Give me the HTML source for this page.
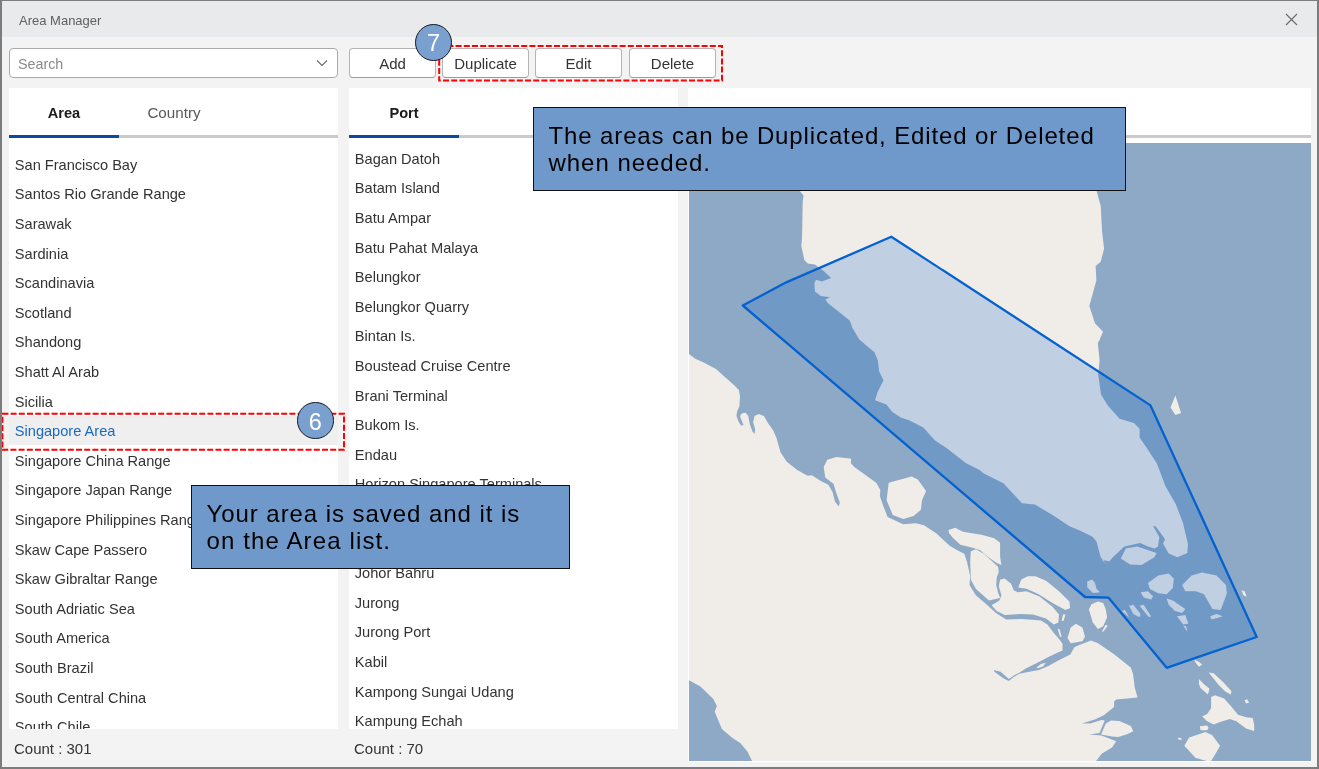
<!DOCTYPE html>
<html><head><meta charset="utf-8">
<style>
*{box-sizing:border-box;margin:0;padding:0}
html,body{width:1319px;height:769px;overflow:hidden;background:#f3f3f3;font-family:"Liberation Sans",sans-serif}
body>*{will-change:transform}
.abs{position:absolute}
#frame{position:absolute;left:0;top:0;width:1319px;height:769px;border-left:2px solid #7c7c7c;border-top:1px solid #7c7c7c;border-right:2px solid #7c7c7c;border-bottom:2px solid #7c7c7c;z-index:50;pointer-events:none}
#title{position:absolute;left:2px;top:1px;width:1315px;height:36px;background:#e9eaec}
#title span{position:absolute;left:17px;top:11.60px;font-size:13px;color:#606060;line-height:16px;white-space:nowrap}
.btn{position:absolute;top:48px;height:30px;width:87px;background:#fff;border:1px solid #b4b4b4;border-bottom-color:#9c9c9c;border-radius:4px}
.btn span{position:absolute;left:0;right:0;top:4.90px;font-size:15px;color:#333;text-align:center;line-height:20px}
.panel{position:absolute;background:#fff;overflow:hidden}
.tab{position:absolute;top:15.20px;width:110px;text-align:center;font-size:15px;line-height:20px;white-space:nowrap}
.tab.on{font-weight:bold;color:#1b1b1b;font-size:14.6px}
.tab.off{color:#5a5a5a}
.tline{position:absolute;top:47px;height:3px;background:#cacaca}
.bline{position:absolute;top:47px;height:3px;background:#0a4a9f}
.item{position:absolute;left:5.8px;font-size:14.6px;color:#333;white-space:nowrap;line-height:18px}
.item.sel{color:#1a68c0}
.count{position:absolute;top:738.50px;font-size:15px;color:#333;line-height:20px;white-space:nowrap}
.callout{position:absolute;background:#6f99cb;border:1px solid #111;z-index:20}
.callout div{position:absolute;font-size:24px;letter-spacing:0.9px;line-height:20px;color:#000;white-space:nowrap}
.circle{position:absolute;border-radius:50%;background:#7aa0d0;border:1.6px solid #141a24;z-index:30}
.circle span{position:absolute;left:0;right:0;text-align:center;color:#fff;font-size:23.5px;line-height:20px}
</style></head><body>
<div id="frame"></div>
<div id="title"><span>Area Manager</span>
<svg class="abs" style="left:1283.3px;top:12.2px" width="13" height="13" viewBox="0 0 13 13"><path d="M1 1L12 12M12 1L1 12" stroke="#6a6a6a" stroke-width="1.1" fill="none"/></svg>
</div>

<div class="abs" style="left:9px;top:48px;width:329px;height:30px;background:#fff;border:1px solid #a9a9a9;border-radius:4px"></div>
<div class="abs" style="left:18.3px;top:54.05px;font-size:14.3px;color:#8a8a8a;line-height:20px">Search</div>
<svg class="abs" style="left:316px;top:58.8px" width="12" height="8" viewBox="0 0 12 8"><path d="M1 1.5L6 6.5L11 1.5" stroke="#6a6a6a" stroke-width="1.1" fill="none"/></svg>

<div class="btn" style="left:349px"><span>Add</span></div>
<div class="btn" style="left:442px"><span>Duplicate</span></div>
<div class="btn" style="left:535px"><span>Edit</span></div>
<div class="btn" style="left:629px"><span>Delete</span></div>

<div class="panel" style="left:9px;top:88px;width:329px;height:641px">
<div class="tab on" style="left:0">Area</div>
<div class="tab off" style="left:110px;font-size:15.2px">Country</div>
<div class="tline" style="left:0;width:329px"></div>
<div class="bline" style="left:0;width:110px"></div>
<div class="abs" style="left:0;top:327.70px;width:329px;height:29px;background:#efefef"></div>
<div class="item" style="top:67.84px">San Francisco Bay</div><div class="item" style="top:97.44px">Santos Rio Grande Range</div><div class="item" style="top:127.04px">Sarawak</div><div class="item" style="top:156.64px">Sardinia</div><div class="item" style="top:186.24px">Scandinavia</div><div class="item" style="top:215.84px">Scotland</div><div class="item" style="top:245.44px">Shandong</div><div class="item" style="top:275.04px">Shatt Al Arab</div><div class="item" style="top:304.64px">Sicilia</div><div class="item sel" style="top:334.24px">Singapore Area</div><div class="item" style="top:363.84px">Singapore China Range</div><div class="item" style="top:393.44px">Singapore Japan Range</div><div class="item" style="top:423.04px">Singapore Philippines Range</div><div class="item" style="top:452.64px">Skaw Cape Passero</div><div class="item" style="top:482.24px">Skaw Gibraltar Range</div><div class="item" style="top:511.84px">South Adriatic Sea</div><div class="item" style="top:541.44px">South America</div><div class="item" style="top:571.04px">South Brazil</div><div class="item" style="top:600.64px">South Central China</div><div class="item" style="top:630.24px">South Chile</div>
</div>

<div class="panel" style="left:349px;top:88px;width:329px;height:641px">
<div class="tab on" style="left:0">Port</div>
<div class="tline" style="left:0;width:329px"></div>
<div class="bline" style="left:0;width:110px"></div>
<div class="item" style="top:61.84px">Bagan Datoh</div><div class="item" style="top:91.44px">Batam Island</div><div class="item" style="top:121.04px">Batu Ampar</div><div class="item" style="top:150.64px">Batu Pahat Malaya</div><div class="item" style="top:180.24px">Belungkor</div><div class="item" style="top:209.84px">Belungkor Quarry</div><div class="item" style="top:239.44px">Bintan Is.</div><div class="item" style="top:269.04px">Boustead Cruise Centre</div><div class="item" style="top:298.64px">Brani Terminal</div><div class="item" style="top:328.24px">Bukom Is.</div><div class="item" style="top:357.84px">Endau</div><div class="item" style="top:387.44px">Horizon Singapore Terminals</div><div class="item" style="top:417.04px">Jahor</div><div class="item" style="top:446.64px">Johor</div><div class="item" style="top:476.24px">Johor Bahru</div><div class="item" style="top:505.84px">Jurong</div><div class="item" style="top:535.44px">Jurong Port</div><div class="item" style="top:565.04px">Kabil</div><div class="item" style="top:594.64px">Kampong Sungai Udang</div><div class="item" style="top:624.24px">Kampung Echah</div>
</div>

<div class="panel" style="left:688px;top:88px;width:623px;height:674px">
<div class="tline" style="left:0;width:623px"></div>
<svg class="abs" style="left:1px;top:55px" width="622" height="618" viewBox="689 143 622 618"><rect x="689" y="143" width="622" height="618" fill="#8ea9c5"/><path d="M689.0,354.1 L695.2,358.7 L703.6,362.5 L716.0,369.1 L725.4,377.5 L733.7,384.7 L738.9,389.9 L740.0,396.2 L739.4,406.6 L737.3,410.7 L736.4,415.9 L738.9,422.2 L741.4,425.7 L743.5,424.9 L741.4,420.1 L740.0,415.9 L742.1,413.2 L745.6,412.8 L748.3,415.9 L749.8,424.3 L752.5,431.6 L754.5,434.0 L755.2,429.5 L753.1,422.2 L754.5,416.0 L758.7,413.9 L763.9,416.0 L768.1,423.2 L773.3,430.5 L776.4,437.8 L780.6,452.4 L786.8,461.7 L797.2,470.0 L807.6,475.7 L811.8,475.2 L820.0,480.6 L828.3,484.7 L832.5,492.0 L835.0,501.4 L838.7,506.6 L839.8,502.4 L836.6,494.1 L833.5,483.7 L825.2,477.5 L823.7,467.0 L827.3,459.8 L836.6,457.1 L851.2,458.7 L850.8,462.9 L854.3,467.0 L876.2,482.7 L880.3,489.9 L879.9,496.2 L883.5,506.6 L887.6,517.0 L903.2,524.3 L915.7,523.2 L924.0,525.3 L936.5,533.6 L950.0,546.0 L957.8,550.6 L964.3,553.8 L966.9,561.6 L970.2,575.9 L969.5,585.0 L976.0,595.4 L986.0,604.0 L996.0,613.0 L1006.0,619.6 L1021.5,619.0 L1041.0,620.5 L1047.4,624.4 L1053.6,632.7 L1059.9,640.0 L1062.5,644.1 L1062.5,650.4 L1057.8,652.4 L1047.4,657.6 L1034.9,663.9 L1026.6,668.0 L1019.3,672.7 L1015.2,674.8 L1008.9,679.0 L1000.6,671.7 L993.8,670.1 L994.4,671.7 L1003.7,678.4 L1008.9,681.0 L1013.1,677.4 L1019.3,673.7 L1031.8,671.2 L1039.1,670.1 L1048.4,666.0 L1057.8,660.8 L1070.3,654.5 L1074.4,647.2 L1078.6,645.2 L1091.1,640.5 L1098.1,643.3 L1114.4,654.6 L1130.7,667.6 L1133.1,674.1 L1134.7,687.2 L1137.5,697.5 L1116.2,699.6 L1114.1,701.6 L1114.1,706.9 L1103.7,715.2 L1095.4,719.3 L1081.9,723.5 L1090.2,723.5 L1101.6,719.9 L1104.7,720.4 L1099.5,732.9 L1089.1,734.4 L1101.6,735.5 L1116.2,741.2 L1112.0,747.4 L1101.6,753.7 L1095.4,762.0 L752.5,762.0 L747.6,751.8 L740.5,743.3 L731.9,737.5 L721.9,729.0 L714.7,711.8 L716.8,706.1 L713.3,698.9 L700.4,686.6 L689.0,680.3Z M797.7,140.0 L799.6,190.8 L803.6,195.5 L802.7,201.4 L802.0,238.8 L801.3,245.8 L804.3,259.9 L807.8,263.4 L814.9,264.5 L824.2,271.5 L831.2,278.1 L821.9,281.4 L816.0,279.7 L814.4,283.2 L814.9,291.4 L820.7,296.1 L830.1,297.3 L825.4,299.6 L827.7,303.1 L838.2,311.3 L849.9,320.7 L852.3,327.7 L859.3,339.4 L867.5,346.4 L874.5,352.3 L877.8,360.2 L879.2,371.6 L883.5,380.2 L877.8,391.6 L875.0,400.2 L886.4,404.5 L892.1,411.7 L900.7,417.4 L909.0,420.2 L923.3,427.4 L934.8,440.3 L946.9,448.3 L965.7,462.9 L980.0,470.2 L983.4,473.2 L1003.4,483.2 L1022.0,503.2 L1034.9,504.6 L1052.1,514.7 L1070.0,526.5 L1078.6,530.0 L1092.2,536.5 L1096.5,541.5 L1100.7,557.2 L1106.5,564.4 L1112.9,557.2 L1124.3,546.5 L1140.1,542.9 L1148.0,546.5 L1154.4,548.6 L1158.0,546.5 L1159.4,537.2 L1153.0,525.8 L1155.8,526.5 L1165.1,539.3 L1163.0,543.6 L1168.7,553.6 L1177.3,557.2 L1187.3,552.9 L1188.0,544.3 L1183.0,522.9 L1175.8,504.3 L1165.4,486.0 L1156.8,463.2 L1145.4,446.0 L1139.6,437.4 L1139.6,428.8 L1133.9,423.1 L1119.6,418.8 L1108.2,405.9 L1101.0,394.5 L1098.2,374.5 L1099.6,360.2 L1097.8,343.0 L1099.3,340.4 L1103.0,331.8 L1095.0,323.2 L1089.3,306.1 L1096.4,280.3 L1095.6,266.0 L1100.7,261.7 L1104.1,248.8 L1102.1,231.7 L1100.7,205.9 L1096.4,190.2 L1096.0,140.0Z M888.7,482.7 L911.6,476.4 L917.8,479.5 L926.1,491.0 L922.0,500.3 L920.9,509.7 L913.6,515.9 L903.2,519.1 L892.8,514.9 L886.6,500.3Z M948.5,530.0 L955.2,527.8 L963.0,531.7 L982.5,535.0 L994.2,538.2 L1000.1,542.8 L1000.1,556.4 L1001.4,564.9 L996.8,562.9 L989.0,557.7 L979.9,549.9 L970.8,547.3 L960.4,544.7 L953.0,538.0 L949.0,533.0Z M970.8,551.2 L976.0,549.3 L983.8,553.8 L998.1,566.8 L998.8,572.0 L996.8,577.2 L996.2,585.0 L998.1,592.8 L1000.1,598.0 L989.0,600.6 L976.0,588.9 L970.8,579.8 L970.2,561.6Z M991.6,605.2 L999.4,600.6 L1001.4,595.4 L998.8,586.3 L1000.1,579.8 L1004.6,578.5 L1011.1,583.7 L1013.7,590.2 L1017.6,592.2 L1026.5,591.2 L1039.5,596.4 L1052.5,606.8 L1059.0,614.6 L1058.4,622.4 L1053.8,624.4 L1046.0,618.5 L1033.0,614.6 L1020.0,614.0 L1004.6,614.9 L996.8,611.0Z M1018.3,587.5 L1021.3,579.5 L1027.8,576.3 L1035.6,576.3 L1046.0,580.8 L1059.0,591.2 L1069.4,601.6 L1070.1,608.1 L1065.5,610.1 L1052.5,602.9 L1038.2,594.0 L1026.5,588.8Z M1067.5,638.0 L1070.7,627.6 L1075.9,623.7 L1082.4,627.6 L1085.0,636.7 L1082.4,641.3 L1070.7,643.2Z M1088.9,609.4 L1091.5,604.2 L1098.0,601.6 L1103.2,602.9 L1105.8,609.4 L1107.1,617.2 L1103.2,626.3 L1098.0,628.9 L1092.8,622.4Z M1061.6,621.1 L1063.0,614.6 L1065.5,614.6 L1063.5,621.1Z M1057.7,629.0 L1059.5,629.0 L1061.6,636.7 L1060.0,636.7Z M1101.9,631.5 L1105.5,625.0 L1107.8,625.5 L1103.5,631.5Z M1120.8,558.6 L1125.8,548.6 L1137.2,546.5 L1156.5,552.9 L1154.4,557.2 L1141.5,565.1 L1130.1,564.4Z M1087.2,581.5 L1092.2,579.4 L1095.0,583.0 L1096.5,588.7 L1100.0,592.3 L1092.9,593.0 L1087.2,587.3Z M1147.9,582.9 L1158.3,575.6 L1168.7,573.5 L1173.9,578.7 L1172.8,588.1 L1166.6,594.3 L1158.3,593.3 L1149.9,589.1Z M1182.2,585.0 L1191.6,575.6 L1202.0,572.5 L1216.5,575.6 L1225.9,585.0 L1226.9,593.3 L1220.7,609.9 L1212.4,608.9 L1208.2,601.6 L1204.0,594.3 L1195.7,591.2 L1185.3,591.2Z M1140.6,592.3 L1147.9,591.2 L1153.1,596.4 L1151.0,599.5 L1143.7,597.5Z M1166.6,598.5 L1172.8,600.6 L1185.3,608.9 L1182.2,613.1 L1174.9,611.0 L1168.7,604.7Z M1177.0,616.2 L1185.3,615.1 L1188.4,623.5 L1183.2,624.5Z M1183.2,625.5 L1186.3,626.6 L1187.4,631.8Z M1129.1,605.8 L1133.3,604.7 L1140.6,614.1 L1139.5,617.2 L1133.3,614.1Z M1139.5,605.8 L1143.7,604.7 L1151.0,616.2 L1148.9,617.2Z M1121.8,611.0 L1125.0,609.9 L1129.1,617.2Z M1210.3,616.2 L1216.5,614.1 L1222.8,616.2 L1216.5,618.3 L1211.3,619.3Z M1101.9,560.0 L1109.7,561.3 L1106.5,564.6Z M1184.3,745.7 L1189.2,737.6 L1205.4,731.9 L1212.0,735.1 L1220.1,745.7 L1213.6,757.1 L1210.3,762.0 L1195.7,757.9Z M1202.2,716.4 L1207.1,714.0 L1211.1,708.3 L1211.1,696.9 L1215.2,695.3 L1224.1,698.5 L1231.5,706.7 L1238.0,714.8 L1246.1,717.2 L1252.6,718.0 L1254.2,724.6 L1254.2,731.1 L1246.1,728.6 L1236.3,721.3 L1229.8,718.9 L1220.1,722.1 L1213.6,724.6 L1207.1,721.3Z M1198.9,679.0 L1203.8,683.9 L1209.5,688.8 L1207.9,694.5 L1200.6,688.0 L1198.9,683.9Z M1208.7,672.5 L1213.6,673.3 L1223.3,682.3 L1231.5,691.2 L1230.7,694.5 L1225.0,691.2 L1218.5,684.7Z M1194.1,659.5 L1199.0,662.0 L1202.2,664.4 L1199.0,666.8 L1195.7,662.8Z M1241.5,590.2 L1244.6,591.2 L1246.7,596.4 L1243.6,595.4Z M1244.5,700.2 L1246.9,699.3 L1249.3,702.6 L1246.1,703.4Z M1199.8,726.2 L1207.1,725.4 L1208.7,727.8 L1207.1,730.2 L1200.6,730.2Z M1178.6,737.6 L1181.9,738.4 L1181.1,740.0 L1177.8,739.2Z M1170.5,407.4 L1175.4,395.4 L1181.1,413.1 L1175.4,415.1Z M1036.5,667.5 L1041.0,664.0 L1045.8,662.8 L1043.0,666.5 L1038.0,668.3Z M1101.1,734.4 L1105.8,723.5 L1111.0,720.4 L1119.3,720.9 L1130.8,726.1 L1133.4,731.3 L1127.6,733.9 L1118.3,737.0 L1112.0,736.5Z" fill="#f0ede8"/><path d="M742.8,305.5 L786.8,282.1 L891.3,236.7 L1150.5,405.4 L1256.7,637.0 L1166.7,667.8 L1108.4,597.6 L1085.0,597.0Z" fill="rgba(0,90,205,0.2)" stroke="#0462d0" stroke-width="2.3" stroke-linejoin="round"/></svg>
</div>

<div class="count" style="left:14px">Count : 301</div>
<div class="count" style="left:354px">Count : 70</div>

<svg class="abs" style="left:0;top:0;z-index:25" width="1319" height="769">
<rect x="439.2" y="46" width="282.8" height="34.6" fill="none" stroke="#ff0000" stroke-width="2" stroke-dasharray="6 2.2"/>
<rect x="2.4" y="413.8" width="341.6" height="36" fill="none" stroke="#ff0000" stroke-width="2" stroke-dasharray="6 2.2"/>
</svg>

<div class="circle" style="left:415px;top:24px;width:37px;height:37px"><span style="top:8.46px">7</span></div>
<div class="circle" style="left:297px;top:402px;width:36.5px;height:36.5px"><span style="top:8.76px">6</span></div>

<div class="callout" style="left:533px;top:107px;width:593px;height:84px">
<div style="left:14.5px;letter-spacing:0.88px;top:18.18px">The areas can be Duplicated, Edited or Deleted</div>
<div style="left:14.5px;letter-spacing:0.97px;top:44.98px">when needed.</div>
</div>
<div class="callout" style="left:191px;top:485px;width:379px;height:84px">
<div style="left:14.5px;letter-spacing:0.94px;top:17.88px">Your area is saved and it is</div>
<div style="left:14.5px;letter-spacing:1.13px;top:45.18px">on the Area list.</div>
</div>
</body></html>
